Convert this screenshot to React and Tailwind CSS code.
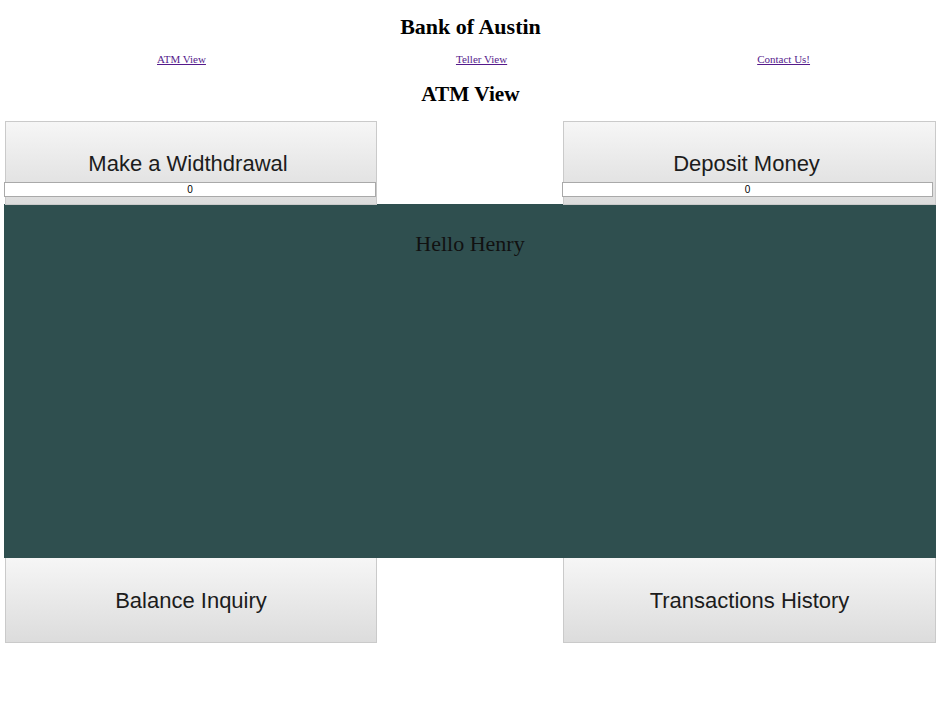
export default function App() {
  const serif = { fontFamily: '"Liberation Serif", "Times New Roman", serif' };
  const sans = { fontFamily: '"Liberation Sans", Arial, sans-serif' };
  const box =
    "border border-[#cacaca] bg-gradient-to-b from-[#f6f6f6] to-[#dcdcdc] text-[22px] leading-[25px] text-[#1c1c1c]";
  return (
    <div className="w-[941px] h-[705px] bg-white relative overflow-hidden" style={serif}>
      <div className="h-[52px] flex items-center justify-center pt-[2px]">
        <h1 className="text-[22px] font-bold leading-none text-black">Bank of Austin</h1>
      </div>
      <div className="h-[14px] flex items-center pl-[157px] gap-[250px] text-[11px] leading-none">
        <a href="#" className="text-[#551a8b] underline">ATM View</a>
        <a href="#" className="text-[#551a8b] underline">Teller View</a>
        <a href="#" className="text-[#551a8b] underline">Contact Us!</a>
      </div>
      <div className="h-[55px] flex items-center justify-center pt-[2px]">
        <h2 className="text-[21.3px] font-bold leading-none text-black">ATM View</h2>
      </div>
      <div className="h-[83px] flex justify-between pl-[5px] pr-[5px]" style={sans}>
        <div className={`${box} w-[372px] h-[84px] flex flex-col items-center pt-[29px] pr-[6px]`}>
          <span>Make a Widthdrawal</span>
          <input
            readOnly
            value="0"
            className="self-start -ml-[2px] mt-[6px] w-[372px] h-[15px] border border-[#a9a9a9] bg-white text-[10px] leading-none text-center text-black outline-none"
          />
        </div>
        <div className={`${box} w-[373px] h-[84px] flex flex-col items-center pt-[29px] pr-[6px]`}>
          <span>Deposit Money</span>
          <input
            readOnly
            value="0"
            className="self-start -ml-[2px] mt-[6px] w-[371px] h-[15px] border border-[#a9a9a9] bg-white text-[10px] leading-none text-center text-black outline-none"
          />
        </div>
      </div>
      <div className="ml-[4px] mr-[5px] h-[354px] bg-[#2f4f4f] flex justify-center pt-[27px]">
        <span className="text-[22px] leading-[25px] text-[#111]">Hello Henry</span>
      </div>
      <div className="h-[85px] flex justify-between pl-[5px] pr-[5px]" style={sans}>
        <div className={`${box} border-t-0 w-[372px] h-[85px] flex items-center justify-center`}>
          <span>Balance Inquiry</span>
        </div>
        <div className={`${box} border-t-0 w-[373px] h-[85px] flex items-center justify-center`}>
          <span>Transactions History</span>
        </div>
      </div>
    </div>
  );
}
